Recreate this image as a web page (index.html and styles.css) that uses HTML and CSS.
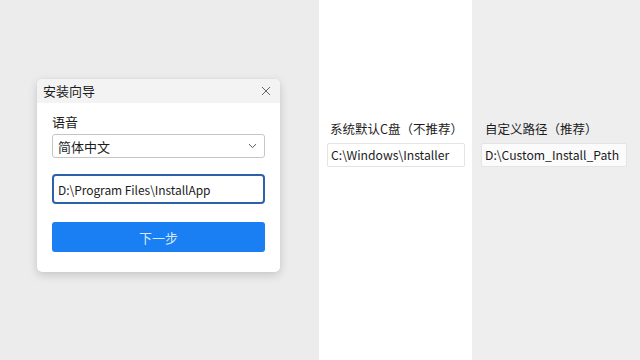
FILE: index.html
```html
<!DOCTYPE html>
<html lang="zh-CN">
<head>
<meta charset="utf-8">
<link rel="stylesheet" href="styles.css">
</head>
<body>
<div class="page">
  <section class="pane pane-left">
    <div class="dialog">
      <div class="titlebar">
        <span class="title">安装向导</span>
        <svg class="close" width="10" height="10" viewBox="0 0 10 10"><path d="M1 1L9 9M9 1L1 9" stroke="#666" stroke-width="1" fill="none"/></svg>
      </div>
      <div class="dialog-body">
        <div class="field-label">语音</div>
        <div class="select">
          <span>简体中文</span>
          <svg class="chev" width="9" height="6" viewBox="0 0 9 6"><path d="M1 1.2L4.5 4.6L8 1.2" stroke="#555" stroke-width="1" fill="none"/></svg>
        </div>
        <div class="path-input">D:\Program Files\InstallApp</div>
        <div class="btn-next">下一步</div>
      </div>
    </div>
  </section>
  <section class="pane pane-mid">
    <div class="opt-label">系统默认C盘（不推荐）</div>
    <div class="opt-box">C:\Windows\Installer</div>
  </section>
  <section class="pane pane-right">
    <div class="opt-label">自定义路径（推荐）</div>
    <div class="opt-box">D:\Custom_Install_Path</div>
  </section>
</div>
</body>
</html>
```
FILE: styles.css
```css
html, body {
  margin: 0;
  padding: 0;
}
body {
  font-family: "Noto Sans CJK SC", "Noto Sans", sans-serif;
  color: #1c1c1c;
}
.page {
  display: flex;
  width: 640px;
  height: 360px;
}
.pane-left {
  width: 319px;
  background: #ececec;
  padding: 79px 0 0 37px;
  box-sizing: border-box;
}
.pane-mid {
  width: 153px;
  background: #ffffff;
  padding: 120px 0 0 8px;
  box-sizing: border-box;
}
.pane-right {
  flex: 1;
  background: #eeeeee;
  padding: 120px 0 0 9px;
  box-sizing: border-box;
}
.dialog {
  width: 243px;
  background: #ffffff;
  border-radius: 5px;
  box-shadow: 0 3px 10px rgba(0,0,0,0.16), 0 0 1px rgba(0,0,0,0.12);
  overflow: hidden;
}
.titlebar {
  height: 24px;
  background: #f3f3f3;
  display: flex;
  align-items: center;
  justify-content: space-between;
  padding: 0 9px 0 6px;
}
.title {
  font-size: 13px;
  line-height: 24px;
}
.close {
  display: block;
}
.dialog-body {
  padding: 10px 15px 20px 15px;
  display: flex;
  flex-direction: column;
}
.field-label {
  font-size: 13px;
  line-height: 18px;
  margin-bottom: 3px;
}
.select {
  height: 24px;
  box-sizing: border-box;
  border: 1px solid #c6c6c6;
  border-radius: 3px;
  display: flex;
  align-items: center;
  justify-content: space-between;
  padding: 0 7px 0 5px;
  font-size: 13px;
}
.chev {
  display: block;
}
.path-input {
  margin-top: 16px;
  height: 30px;
  box-sizing: border-box;
  border: 2px solid #2d61aa;
  border-radius: 4px;
  padding: 0 4px;
  display: flex;
  align-items: center;
  font-size: 12px;
  letter-spacing: -0.05px;
}
.btn-next {
  margin-top: 18px;
  height: 30px;
  border-radius: 3px;
  background: #1a7ff2;
  color: #d6e8fc;
  font-size: 13px;
  display: flex;
  align-items: center;
  justify-content: center;
}
.opt-label {
  font-size: 12.5px;
  line-height: 18px;
  margin-bottom: 5px;
  padding-left: 3px;
}
.pane-right .opt-label {
  padding-left: 4px;
}
.opt-box {
  height: 24px;
  box-sizing: border-box;
  border: 1px solid #e4e4e4;
  background: #ffffff;
  border-radius: 2px;
  display: flex;
  align-items: center;
  padding: 0 3px;
  font-size: 12.2px;
}
.pane-mid .opt-box {
  width: 138px;
}
.pane-right .opt-box {
  width: 146px;
  background: #fbfbfb;
}
```
